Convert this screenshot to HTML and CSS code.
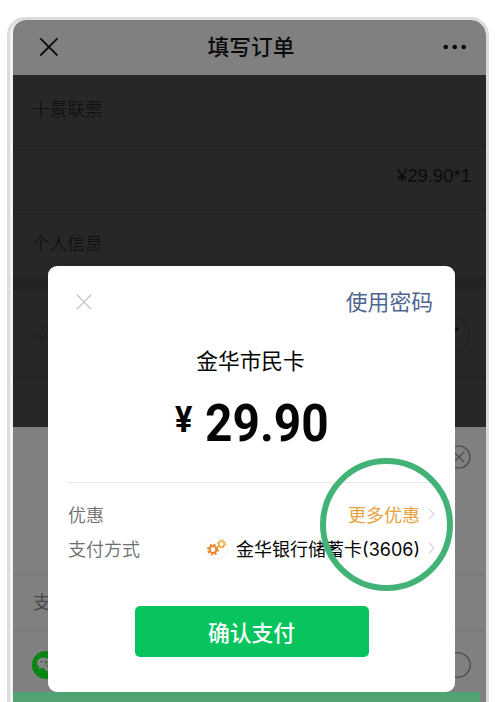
FILE: index.html
```html
<!DOCTYPE html>
<html lang="zh-CN">
<head>
<meta charset="utf-8">
<title>填写订单</title>
<link rel="stylesheet" href="styles.css">
</head>
<body>
<div class="phone">
  <div class="screen">
    <header class="nav">
      <svg class="nav-close" width="20" height="20" viewBox="0 0 20 20"><path d="M1.3 1.3l17.2 17.2M18.5 1.3L1.3 18.5"/></svg>
      <h1>填写订单</h1>
      <svg class="nav-more" width="24" height="6" viewBox="0 0 24 6"><circle cx="2.7" cy="3" r="2.3"/><circle cx="11.7" cy="3" r="2.3"/><circle cx="20.7" cy="3" r="2.3"/></svg>
    </header>
    <section class="order">
      <div class="row ticket">十景联票</div>
      <div class="row cost">¥29.90*1</div>
      <div class="row info">个人信息</div>
      <div class="gap"></div>
      <div class="row person">
        <svg width="22" height="22" viewBox="0 0 22 22"><circle cx="11" cy="11" r="8" stroke-dasharray="4 2"/><circle cx="11" cy="11" r="4"/></svg>
        <svg width="40" height="40" viewBox="0 0 40 40"><circle cx="20" cy="20" r="18"/><circle class="dot" cx="25.500" cy="15" r="1.700"/></svg>
      </div>
    </section>
    <section class="payment">
      <div class="row clear"><svg width="24" height="24" viewBox="0 0 24 24"><circle cx="12" cy="12" r="11"/><path d="M7 7l10 10M17 7L7 17"/></svg></div>
      <div class="row method">支付方式</div>
      <div class="row wechat">
        <svg width="28" height="28" viewBox="0 0 28 28"><circle class="disc" cx="14" cy="14" r="14"/><path class="bubble" d="M11.500 6.500c-3.600 0-6.500 2.400-6.500 5.400 0 1.700 1 3.200 2.400 4.200L6.800 18.200l2.500-1.300 2.700.3c-.5-4 2-6.600 5.700-6.700-.9-2.400-3.300-4-6.200-4z"/><path class="bubble" d="M17.500 11.500c-3 0-5.500 2-5.500 4.500s2.500 4.500 5.500 4.500l1.900-.3 2.100 1.200-.5-1.900c3.700-2.700 1.400-8-3.500-8z"/><circle class="eye" cx="9.500" cy="10.500" r=".8"/><circle class="eye" cx="13.500" cy="10.500" r=".8"/><circle class="eye" cx="15.500" cy="14.700" r=".7"/></svg>
        <svg width="26" height="26" viewBox="0 0 26 26"><circle class="radio" cx="13" cy="13" r="12.200"/></svg>
      </div>
      <div class="submit"></div>
    </section>
  </div>
</div>

<div class="dialog">
  <div class="dialog-top">
    <svg width="16" height="16" viewBox="0 0 16 16"><path d="M.8.8l14.400 14.400M15.200.8L.8 15.200"/></svg>
    <span>使用密码</span>
  </div>
  <div class="payee">金华市民卡</div>
  <div class="price"><span class="yen">¥</span><span class="amount">29.90</span></div>
  <div class="details">
    <div class="detail">
      <span class="label">优惠</span>
      <span class="offer">更多优惠</span>
      <svg class="arrow" width="7" height="12" viewBox="0 0 7 12"><path d="M1 1l5 5-5 5"/></svg>
    </div>
    <div class="detail">
      <span class="label">支付方式</span>
      <svg class="bank" width="24" height="24" viewBox="0 0 24 24">
        <circle class="plate" cx="13" cy="12" r="11"/>
        <g class="gear big"><circle cx="9" cy="13.500" r="3.400"/><circle class="teeth" cx="9" cy="13.500" r="4.900"/></g>
        <g class="gear small"><circle cx="17.500" cy="8" r="2.700"/><circle class="teeth" cx="17.500" cy="8" r="3.900"/></g>
      </svg>
      <span class="card">金华银行储蓄卡(3606)</span>
      <svg class="arrow" width="7" height="12" viewBox="0 0 7 12"><path d="M1 1l5 5-5 5"/></svg>
    </div>
  </div>
  <button class="confirm">确认支付</button>
</div>
<div class="highlight"></div>
</body>
</html>
```
FILE: styles.css
```css
* { box-sizing: border-box; }

body {
  margin: 0;
  height: 702px;
  overflow: hidden;
  position: relative;
  background: #fff;
  font-family: Inter, "Noto Sans CJK SC", sans-serif;
}

svg { display: block; fill: none; flex: none; }

.phone {
  width: 482px;
  height: 720px;
  margin: 17px 0 0 7px;
  padding-left: 3px;
  border: 3px solid #dcdcdc;
  border-radius: 18px 18px 0 0;
  background: #f2f2f2;
  overflow: hidden;
}

body::before { content: ""; display: table; }

.screen {
  height: 100%;
  background: #808080;
  border-radius: 13px 15px 0 0;
  overflow: hidden;
}

.nav {
  height: 55px;
  padding: 0 19px 2px 26px;
  display: flex;
  align-items: center;
  justify-content: space-between;
}
.nav h1 {
  margin: 0 4px 0 4px;
  font-size: 21.700px;
  font-weight: 500;
  line-height: 30px;
  color: #0a0a0a;
}
.nav-close { stroke: #0c0c0c; stroke-width: 1.800; }
.nav-more { fill: #080808; }

.order { height: 352px; background: #272727; color: #0b0b0b; }
.row { display: flex; align-items: center; padding: 0 15px 0 20px; font-size: 17.700px; }
.order .row { border-bottom: 1px solid #222; font-weight: 300; }
.order .ticket, .order .info { padding-left: 19px; }
.ticket { height: 72px; padding-bottom: 6px; }
.cost { height: 64px; justify-content: flex-end; padding-bottom: 6px; font-family: "Liberation Sans", sans-serif; }
.order .cost { font-size: 18.500px; }
.order .info { height: 66px; border: 0; padding-bottom: 4px; }
.gap { height: 13px; background: #232323; }
.person { height: 88px; justify-content: space-between; stroke: #1e1e1e; }
.order .person { padding: 0 15px 0 18px; }
.person .dot { fill: #050505; }

.clear { height: 148px; align-items: flex-start; justify-content: flex-end; padding-top: 18px; border-bottom: 1px solid #787878; stroke: #4b4b4b; stroke-width: 1.200; }
.method { height: 56px; padding-bottom: 3px; color: #474747; border-bottom: 1px solid #787878; }
.wechat { height: 61px; justify-content: space-between; padding: 7px 15px 0 19px; }
.disc { fill: #078512; }
.bubble { fill: #858585; }
.eye { fill: #333; }
.radio { stroke: #424242; stroke-width: 1.100; }
.submit { height: 30px; margin-right: 6px; background: #51a373; }

.dialog {
  position: absolute;
  left: 48px;
  top: 266px;
  width: 407px;
  height: 426px;
  padding: 0 20px;
  border-radius: 9px;
  background: #fff;
  color: #050505;
}
.dialog-top {
  height: 72px;
  padding: 0 2px 0 8px;
  display: flex;
  align-items: center;
  justify-content: space-between;
  color: #50658f;
  font-size: 21.800px;
  stroke: #c6c6c6;
  stroke-width: 1.300;
}
.dialog-top span { stroke: none; padding-bottom: 4px; }
.payee { height: 47px; line-height: 47px; padding-right: 2px; text-align: center; font-size: 21.700px; }
.price {
  height: 98px;
  border-bottom: 1px solid #e6e6e6;
  display: flex;
  padding-left: 107px;
  font-family: Roboto, sans-serif;
  font-weight: 700;
}
.yen { width: 30px; padding-top: 15px; font-size: 36px; line-height: 40px; transform: scaleX(.9); transform-origin: left; }
.amount { padding-top: 9px; font-size: 52px; line-height: 60px; transform: scaleX(.92); transform-origin: left; }
.details { padding-top: 14px; }
.detail { display: flex; align-items: center; height: 34px; font-size: 18px; white-space: nowrap; }
.label { flex: 1; color: #6e6e6e; font-weight: 350; }
.offer { color: #e5a441; }
.arrow { margin-left: 8px; stroke: #d6d6d6; stroke-width: 1.300; }
.bank { margin-right: 8px; }
.plate { stroke: #f1f1f1; }
.gear { stroke: #e98225; stroke-width: 2; }
.gear.small { stroke: #efb443; stroke-width: 1.600; }
.teeth { stroke-dasharray: 1.900 1.950; }
.small .teeth { stroke-dasharray: 1.500 1.560; }
.confirm {
  display: block;
  width: 234px;
  height: 51px;
  margin: 41px auto 0 66.500px;
  padding: 0;
  border: 0;
  border-radius: 5px;
  background: #07c45f;
  color: #fff;
  font: 500 21.800px/49px "Noto Sans CJK SC", sans-serif;
}

.highlight {
  position: absolute;
  left: 320px;
  top: 458px;
  width: 133px;
  height: 133px;
  border: 6px solid #43b277;
  border-radius: 50%;
}
```
